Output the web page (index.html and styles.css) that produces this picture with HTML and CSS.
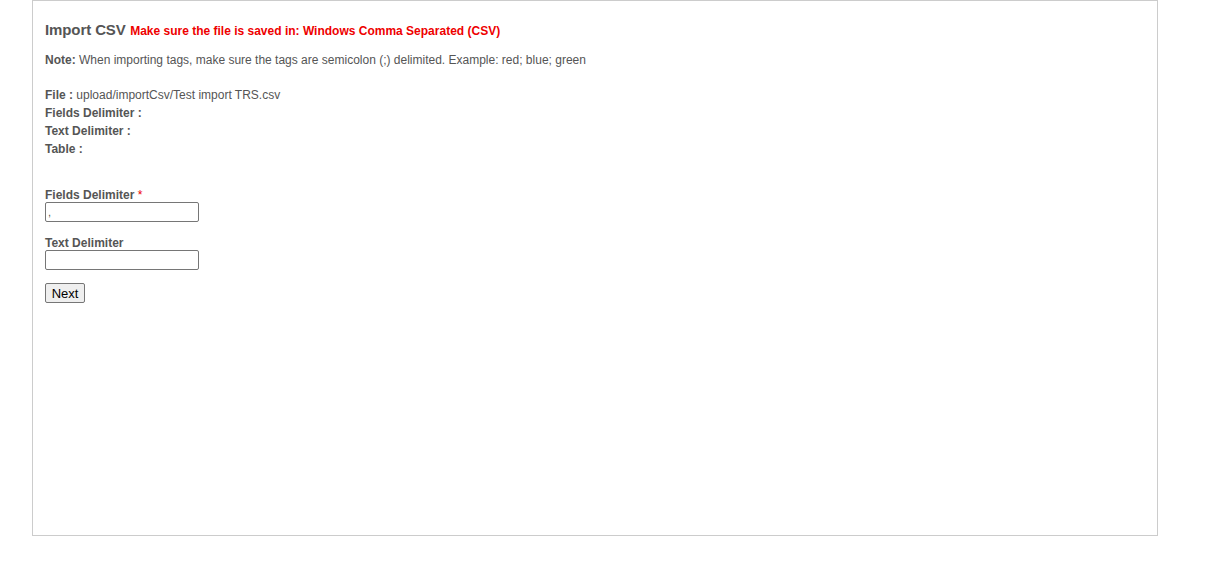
FILE: index.html
```html
<html>
<head>
<title>Import CSV</title>
<link rel="stylesheet" href="styles.css">
</head>
<body>

<div class='frame'>
  <div class='heading'>
    <span class='title'>Import CSV</span>
    <span class='warning'>Make sure the file is saved in: Windows Comma Separated (CSV)</span>
  </div>
  <div class='note'><b>Note:</b> When importing tags, make sure the tags are semicolon (;) delimited. Example: red; blue; green</div>

  <div class='summary'>
    <div><b>File :</b> upload/importCsv/Test import TRS.csv</div>
    <div><b>Fields Delimiter :</b></div>
    <div><b>Text Delimiter :</b></div>
    <div><b>Table :</b></div>
  </div>

  <form class='options'>
    <div class='field'>
      <label>Fields Delimiter <span class='required'>*</span></label>
      <input type='text' value=','>
    </div>
    <div class='field'>
      <label>Text Delimiter</label>
      <input type='text' value=''>
    </div>
    <button type='button'>Next</button>
  </form>
</div>

</body>
</html>
```

FILE: styles.css
```css
body{
  margin:0px;
  font-family:"Liberation Sans", Arial, sans-serif;
  color:rgb(85,85,85);
}

.frame{
  box-sizing:border-box;
  width:1126px;
  height:536px;
  margin-left:32px;
  padding:20px 12px 0px 12px;

  border:1px solid rgb(204,204,204);
}

.heading{
  line-height:18px;
}
.heading .title{
  font-size:15px;
  font-weight:700;
  letter-spacing:-0.1px;
}
.heading .warning{
  font-size:12px;
  font-weight:700;
  color:rgb(238,0,0);
}

.note{
  font-size:12px;
  line-height:18px;
  margin-top:11px;
}

.summary{
  font-size:12px;
  line-height:18px;
  margin-top:17px;
}

.options{
  margin:28px 0px 0px 0px;
}
.field{
  margin-bottom:12px;
}
.field label{
  display:block;
  font-size:12px;
  font-weight:700;
  line-height:14px;
  padding-top:2px;
}
.field .required{
  color:rgb(238,0,0);
  font-weight:400;
}
.field input{
  box-sizing:border-box;
  display:block;
  width:154px;
  height:20px;
  margin:0px;
  padding:1px 2px;

  font-family:"Liberation Sans", Arial, sans-serif;
  font-size:11px;
  color:rgb(85,85,85);

  border:1px solid rgb(118,118,118);
  border-radius:2px;
}

.options button{
  box-sizing:border-box;
  width:40px;
  height:20px;
  margin-top:1px;
  padding:0px;

  font-family:"Liberation Sans", Arial, sans-serif;
  font-size:13px;
  color:rgb(0,0,0);

  background:rgb(239,239,239);
  border:1px solid rgb(118,118,118);
  border-radius:2px;
}
```
